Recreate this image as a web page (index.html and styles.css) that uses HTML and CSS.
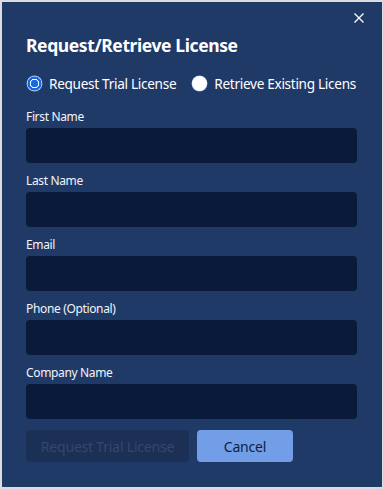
FILE: index.html
```html
<!DOCTYPE html>
<html>
<head>
<meta charset="utf-8">
<link rel="stylesheet" href="styles.css">
</head>
<body>
<div class="dialog">
  <div class="top">
    <button class="close" aria-label="Close">
      <svg width="10" height="10" viewBox="0 0 10 10"><path d="M0.5 0.5 L9.5 9.5 M9.5 0.5 L0.5 9.5" stroke="#fff" stroke-width="1.3" fill="none"/></svg>
    </button>
  </div>
  <h1 class="title">Request/Retrieve License</h1>
  <div class="radios">
    <label class="option"><span class="radio checked"></span><span>Request Trial License</span></label>
    <label class="option"><span class="radio"></span><span>Retrieve Existing Licens</span></label>
  </div>
  <div class="field"><div class="label">First Name</div><div class="input"></div></div>
  <div class="field"><div class="label">Last Name</div><div class="input"></div></div>
  <div class="field"><div class="label">Email</div><div class="input"></div></div>
  <div class="field"><div class="label">Phone (Optional)</div><div class="input"></div></div>
  <div class="field"><div class="label">Company Name</div><div class="input"></div></div>
  <div class="buttons">
    <button class="btn disabled">Request Trial License</button>
    <button class="btn primary">Cancel</button>
  </div>
</div>
</body>
</html>
```
FILE: styles.css
```css
html, body {
  margin: 0;
  padding: 0;
}
body {
  background: #dcdcdc;
  width: 383px;
  height: 489px;
  overflow: hidden;
  font-family: "Noto Sans", "Open Sans", sans-serif;
}
.dialog {
  box-sizing: border-box;
  margin: 2px 1px 0 2px;
  width: 380px;
  height: 485px;
  background: #203a68;
  padding: 0 24px;
  color: #fff;
}
.top {
  height: 31px;
  display: flex;
  justify-content: flex-end;
  align-items: flex-start;
}
.close {
  background: none;
  border: none;
  padding: 0;
  margin: 11px -6px 0 0;
  width: 10px;
  height: 10px;
  display: block;
}
.close svg { display: block; }
.title {
  margin: 0;
  font-size: 17.5px;
  line-height: 24px;
  font-weight: 700;
  letter-spacing: -0.4px;
}
.radios {
  margin-top: 16px;
  height: 20px;
  display: flex;
  align-items: center;
  gap: 15px;
  font-size: 13.6px;
  letter-spacing: -0.3px;
}
.option {
  display: flex;
  align-items: center;
  gap: 7px;
  white-space: nowrap;
  flex: none;
}
.radio {
  width: 15px;
  height: 15px;
  border-radius: 50%;
  background: #fff;
  box-shadow: 0 0 0 0.5px #8fb0e8;
  margin-left: 1px;
  flex: none;
}
.radio.checked {
  background: radial-gradient(circle, #1a6ad8 0 3.5px, #fff 4px 4.6px, #1a6ad8 5px 6.8px, #e8f0ff 7.2px);
}
.field {
  margin-top: 14px;
}
.field + .field {
  margin-top: 8px;
}
.label {
  font-size: 12px;
  line-height: 16px;
  padding-top: 2px;
  margin-bottom: 3px;
  letter-spacing: -0.35px;
  color: #f2f4f8;
}
.input {
  height: 35px;
  width: 331px;
  background: #0a1a3b;
  border-radius: 4px;
}
.buttons {
  margin-top: 11px;
  display: flex;
  gap: 8px;
}
.btn {
  height: 32px;
  border: none;
  border-radius: 4px;
  font-family: "Noto Sans", "Open Sans", sans-serif;
  font-size: 14px;
  letter-spacing: -0.2px;
  padding: 0;
}
.btn.disabled {
  width: 163px;
  background: #1c2f55;
  color: #34486d;
}
.btn.primary {
  width: 96px;
  background: #719ee6;
  color: #0d1e3c;
}
```
